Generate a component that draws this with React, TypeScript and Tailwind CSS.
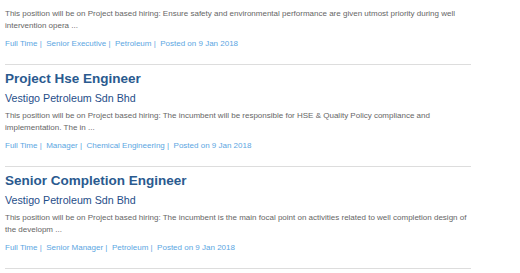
const jobs = [
  {
    title: '',
    company: '',
    desc: 'This position will be on Project based hiring: Ensure safety and environmental performance are given utmost priority during well intervention opera ...',
    tags: ['Full Time', 'Senior Executive', 'Petroleum'],
  },
  {
    title: 'Project Hse Engineer',
    company: 'Vestigo Petroleum Sdn Bhd',
    desc: 'This position will be on Project based hiring: The incumbent will be responsible for HSE & Quality Policy compliance and implementation. The in ...',
    tags: ['Full Time', 'Manager', 'Chemical Engineering'],
  },
  {
    title: 'Senior Completion Engineer',
    company: 'Vestigo Petroleum Sdn Bhd',
    desc: 'This position will be on Project based hiring: The incumbent is the main focal point on activities related to well completion design of the developm ...',
    tags: ['Full Time', 'Senior Manager', 'Petroleum'],
  },
]

export default function App() {
  return (
    <div className="h-[273px] w-[520px] overflow-hidden bg-white font-['Liberation_Sans',Arial,sans-serif]">
      <div className="ml-[5px] w-[466px]">
        {jobs.map((job, i) => (
          <div
            key={i}
            className={i === 0 ? 'border-b border-[#dddddd] pt-[8px] pb-[14px]' : 'border-b border-[#dddddd] pt-[6px] pb-[14px]'}
          >
            {job.title && (
              <>
                <h3 className="text-[13.5px] font-bold leading-[16px] text-[#2a5a8f]">{job.title}</h3>
                <p className="mt-[4px] mb-[5px] text-[10.7px] leading-[14px] text-[#1f4e89]">{job.company}</p>
              </>
            )}
            <p className="text-[8px] leading-[12px] text-[#666666]">{job.desc}</p>
            <div className="mt-[6px] text-[8px] leading-[12px] text-[#5ba6e2]">
              {job.tags.map((t) => (
                <span key={t}>
                  <a href="#">{t}</a> |&nbsp;&nbsp;
                </span>
              ))}
              <span>Posted on 9 Jan 2018</span>
            </div>
          </div>
        ))}
      </div>
    </div>
  )
}
